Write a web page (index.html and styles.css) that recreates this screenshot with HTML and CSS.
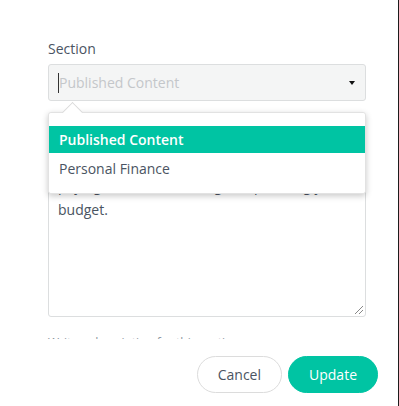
FILE: index.html
```html
<!DOCTYPE html>
<html lang="en-US">
  <head>
    <title>Edit Section</title>
    <link rel="stylesheet" href="styles.css">
  </head>
  <body>
    <div class="modal">
      <div class="modal-body">
        <div class="field field-select">
          <label class="field-label">Section</label>
          <div class="select">
            <span class="caret"></span>
            <span class="placeholder">Published Content</span>
            <span class="select-arrow"></span>
          </div>
          <div class="dropdown">
            <span class="dropdown-pointer"></span>
            <ul class="dropdown-list">
              <li class="dropdown-item is-active">Published Content</li>
              <li class="dropdown-item">Personal Finance</li>
            </ul>
          </div>
        </div>

        <div class="field">
          <label class="field-label">Description</label>
          <div class="textarea">Tips, guides and news about saving money, paying off debt, investing and planning your budget.<span class="resize"></span></div>
          <p class="help">Write a description for this section.</p>
        </div>
      </div>

      <div class="modal-footer">
        <button class="btn btn-cancel" type="button">Cancel</button>
        <button class="btn btn-primary" type="submit">Update</button>
      </div>
    </div>
  </body>
</html>
```

FILE: styles.css
```css
body {
  margin: 0;
  font-family: "Open Sans", sans-serif;
  color: #4a5462;
  background: #fff;
}

.modal {
  width: 398px;
  height: 406px;
  border-right: 1px solid #1c1c1c;
}

.modal-body {
  height: 339px;
  overflow: hidden;
  padding: 39px 32px 0 48px;
  box-sizing: border-box;
}

.field {
  position: relative;
}

.field-select {
  margin-bottom: 19px;
}

.field-label {
  display: block;
  font-size: 14px;
  line-height: 20px;
  margin-bottom: 5px;
}

.select {
  position: relative;
  display: flex;
  align-items: center;
  height: 37px;
  padding: 0 9px;
  border: 1px solid #dcdedf;
  border-radius: 3px;
  background: #f4f5f5;
  box-sizing: border-box;
}

.caret {
  width: 1px;
  height: 20px;
  background: #333;
}

.placeholder {
  font-size: 14px;
  color: #c4c7ca;
  flex: 1;
}

.select-arrow {
  width: 0;
  height: 0;
  border-left: 3.5px solid transparent;
  border-right: 3.5px solid transparent;
  border-top: 4px solid #111;
  margin-right: 1px;
}

.dropdown {
  position: absolute;
  left: 0;
  right: 0;
  top: 73px;
  z-index: 2;
  background: #fff;
  border: 1px solid #e2e2e2;
  border-radius: 3px;
  box-shadow: 0 2px 6px rgba(0, 0, 0, 0.22);
}

.dropdown-pointer {
  position: absolute;
  top: -8px;
  left: 16px;
  width: 14px;
  height: 14px;
  background: #fff;
  border-left: 1px solid #dadada;
  border-top: 1px solid #dadada;
  transform: rotate(45deg);
}

.dropdown-list {
  position: relative;
  list-style: none;
  margin: 0;
  padding: 13px 0 11px;
  background: #fff;
  border-radius: 3px;
}

.dropdown-item {
  height: 27px;
  line-height: 27px;
  padding: 0 10px;
  font-size: 14px;
}

.dropdown-item + .dropdown-item {
  margin-top: 2px;
}

.dropdown-item.is-active {
  background: #00c4a3;
  color: #fff;
  font-weight: 600;
}

.textarea {
  position: relative;
  height: 172px;
  padding: 4px 9px;
  border: 1px solid #dcdedf;
  border-radius: 3px;
  font-size: 14px;
  line-height: 24px;
  box-sizing: border-box;
}

.resize {
  position: absolute;
  right: 2px;
  bottom: 2px;
  width: 8px;
  height: 8px;
  background: linear-gradient(135deg, transparent 45%, #888 46%, #888 52%, transparent 53%, transparent 70%, #888 71%, #888 77%, transparent 78%);
}

.help {
  margin: 17px 0 0;
  font-size: 12px;
  color: #8a929c;
}

.modal-footer {
  display: flex;
  justify-content: flex-end;
  gap: 6px;
  padding: 17px 20px 0 0;
}

.btn {
  height: 37px;
  padding: 0 20px;
  border-radius: 19px;
  font-family: "Open Sans", sans-serif;
  font-size: 14px;
  cursor: pointer;
}

.btn-cancel {
  background: #fff;
  border: 1px solid #dcdcdc;
  color: #4a5462;
}

.btn-primary {
  background: #00c4a3;
  border: 1px solid #00c4a3;
  color: #fff;
}
```
